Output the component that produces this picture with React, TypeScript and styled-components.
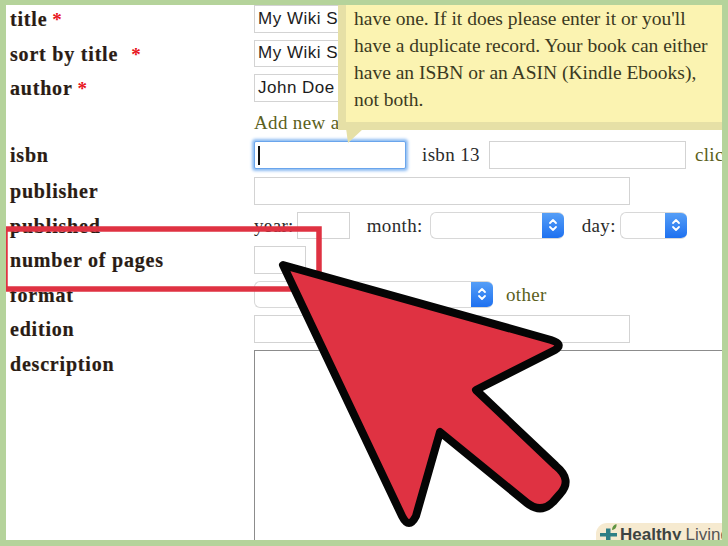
import React from 'react'
import styled, { createGlobalStyle } from 'styled-components'

const GlobalStyle = createGlobalStyle`
  html, body { margin: 0; padding: 0; background: #fff; }
  #root { width: 728px; height: 546px; overflow: hidden; }
`

const Frame = styled.div`
  position: relative;
  box-sizing: border-box;
  width: 728px;
  height: 546px;
  overflow: hidden;
  background: #fff;
  border: 6px solid #b5d39b;
  border-top-width: 5px;
  font-family: 'Liberation Serif', Georgia, serif;
`

const Form = styled.div`
  display: grid;
  grid-template-columns: 248px 1fr;
  grid-auto-rows: min-content;
`

const Label = styled.div<{ $height: number }>`
  height: ${(p) => p.$height}px;
  padding-left: 4px;
  font-size: 20px;
  font-weight: 700;
  line-height: 29px;
  letter-spacing: 0.8px;
  color: #2a1c14;
  -webkit-text-stroke: 0.2px #2a1c14;
  white-space: nowrap;
`

const Star = styled.span<{ $gap?: number }>`
  margin-left: ${(p) => p.$gap ?? 5}px;
  color: #e8141c;
  -webkit-text-stroke: 0;
  font-size: 19px;
`

const FieldRow = styled.div<{ $height: number }>`
  display: flex;
  align-items: flex-start;
  height: ${(p) => p.$height}px;
  white-space: nowrap;
`

const TextField = styled.div<{ $width: number; $focused?: boolean; $left?: number }>`
  box-sizing: border-box;
  flex: none;
  display: flex;
  align-items: center;
  overflow: hidden;
  width: ${(p) => p.$width}px;
  height: 27.6px;
  margin-left: ${(p) => p.$left ?? 0}px;
  padding-left: 3px;
  background: #fff;
  border: 1.5px solid ${(p) => (p.$focused ? '#6aa5ec' : '#d3d3d3')};
  box-shadow: ${(p) => (p.$focused ? '0 0 3px 1.5px #8dbcf2' : 'none')};
  border-radius: ${(p) => (p.$focused ? 2 : 0)}px;
  font-family: 'Liberation Sans', Arial, sans-serif;
  font-size: 17px;
  letter-spacing: 0.5px;
  color: #1c1c1c;
`

const Caret = styled.span`
  width: 2px;
  height: 19px;
  background: #111;
`

const Inline = styled.span<{ $left: number; $olive?: boolean }>`
  flex: none;
  margin-left: ${(p) => p.$left}px;
  font-size: 19px;
  line-height: 27px;
  letter-spacing: 0.35px;
  color: ${(p) => (p.$olive ? '#5b6020' : '#2b2b2b')};
`

const SelectBox = styled.div<{ $width: number; $left?: number }>`
  box-sizing: border-box;
  flex: none;
  display: flex;
  justify-content: flex-end;
  width: ${(p) => p.$width}px;
  height: 27px;
  margin-left: ${(p) => p.$left ?? 0}px;
  background: #fff;
  border: 1.5px solid #d8d8d8;
  border-right: none;
  border-radius: 6px;
  overflow: hidden;
`

const SelectCap = styled.div`
  width: 22px;
  margin: -1.5px 0;
  display: flex;
  align-items: center;
  justify-content: center;
  background: linear-gradient(#5aa2f7, #1c6ff0);
`

const TextArea = styled.div`
  box-sizing: border-box;
  width: 490px;
  height: 200px;
  background: #fff;
  border-top: 1.5px solid #8c8c8c;
  border-left: 1.5px solid #8c8c8c;
`

const Tooltip = styled.div`
  position: absolute;
  left: 332px;
  top: 0;
  box-sizing: border-box;
  width: 384px;
  height: 125px;
  padding: 0 0 0 8px;
  background: #fbf3b1;
  border-left: 8px solid #e6e0a6;
  border-bottom: 8px solid #e6e0a6;
  font-size: 19.5px;
  line-height: 27px;
  letter-spacing: 0;
  color: #3b3a22;
  white-space: nowrap;
`

const TooltipLine = styled.div`
  height: 27px;
`

const Overlay = styled.svg`
  position: absolute;
  left: -6px;
  top: -5px;
  width: 728px;
  height: 546px;
  pointer-events: none;
`

const Badge = styled.div`
  position: absolute;
  right: -6px;
  bottom: -6px;
  box-sizing: border-box;
  display: flex;
  align-items: center;
  width: 132px;
  height: 23px;
  padding-left: 3px;
  gap: 1px;
  background: #f6ead0;
  border-top-left-radius: 11px;
  font-family: 'Liberation Sans', Arial, sans-serif;
  font-size: 17px;
  line-height: 21px;
  color: #555;
  white-space: nowrap;
`

const BadgeStrong = styled.strong`
  color: #3d4442;
  margin-right: 4px;
`

const BadgeGlyph = styled.svg`
  flex: none;
  width: 20px;
  height: 23px;
`

function Chevrons() {
  return (
    <svg width="10" height="16" viewBox="0 0 10 16" fill="none" stroke="#fff" strokeWidth="1.8" strokeLinecap="round" strokeLinejoin="round">
      <path d="M2 6 5 3 8 6" />
      <path d="M2 10 5 13 8 10" />
    </svg>
  )
}

function BadgeIcon() {
  return (
    <BadgeGlyph viewBox="0 0 20 23">
      <path d="M7 5.5h4.5V10H18v3.5h-6.5V20H7v-6.5H1V10h6z" fill="#2f7f86" />
      <path d="M13 7c0-3.5 2-5.5 4.5-6 .3 3-1 5.500-4.500 6z" fill="#5f9440" />
    </BadgeGlyph>
  )
}

export default function App() {
  return (
    <>
      <GlobalStyle />
      <Frame>
        <Form>
          <Label $height={34.6}>title<Star>*</Star></Label>
          <FieldRow $height={34.6}><TextField $width={86}>My Wiki Sa</TextField></FieldRow>

          <Label $height={34.6}>sort by title<Star $gap={13}>*</Star></Label>
          <FieldRow $height={34.6}><TextField $width={86}>My Wiki Sa</TextField></FieldRow>

          <Label $height={34.6}>author<Star>*</Star></Label>
          <FieldRow $height={34.6}><TextField $width={86}>John Doe</TextField></FieldRow>

          <Label $height={32.6} />
          <FieldRow $height={32.6}><Inline $left={0} $olive>Add new a</Inline></FieldRow>

          <Label $height={35.6}>isbn</Label>
          <FieldRow $height={35.6}>
            <TextField $width={152} $focused><Caret /></TextField>
            <Inline $left={16}>isbn 13</Inline>
            <TextField $width={197} $left={9} />
            <Inline $left={9} $olive>clic</Inline>
          </FieldRow>

          <Label $height={34.6}>publisher</Label>
          <FieldRow $height={34.6}><TextField $width={376} /></FieldRow>

          <Label $height={34.6}>published</Label>
          <FieldRow $height={34.6}>
            <Inline $left={0}>year:</Inline>
            <TextField $width={53} $left={3} />
            <Inline $left={17}>month:</Inline>
            <SelectBox $width={134} $left={7}><SelectCap><Chevrons /></SelectCap></SelectBox>
            <Inline $left={18}>day:</Inline>
            <SelectBox $width={67} $left={4}><SelectCap><Chevrons /></SelectCap></SelectBox>
          </FieldRow>

          <Label $height={34.6}>number of pages</Label>
          <FieldRow $height={34.6}><TextField $width={52} /></FieldRow>

          <Label $height={34.6}>format</Label>
          <FieldRow $height={34.6}>
            <SelectBox $width={239}><SelectCap><Chevrons /></SelectCap></SelectBox>
            <Inline $left={13} $olive>other</Inline>
          </FieldRow>

          <Label $height={34.6}>edition</Label>
          <FieldRow $height={34.6}><TextField $width={376} /></FieldRow>

          <Label $height={200}>description</Label>
          <TextArea />
        </Form>

        <Tooltip>
          <TooltipLine>have one. If it does please enter it or you'll</TooltipLine>
          <TooltipLine>have a duplicate record. Your book can either</TooltipLine>
          <TooltipLine>have an ISBN or an ASIN (Kindle Ebooks),</TooltipLine>
          <TooltipLine>not both.</TooltipLine>
        </Tooltip>

        <Overlay viewBox="0 0 728 546">
          <path d="M346 128 L348 143 L364 128 Z" fill="#e6e0a6" />
          <rect x="5" y="229" width="314" height="60" fill="none" stroke="#df3242" strokeWidth="5.5" />
          <path
            d="M283 265 L551 340 Q564 344 555 350 L476 390 L556 466 Q573 480 560 494 L553 502 Q541 514 527 503 L440 432 L416 516 Q409 530 402 516 Z"
            fill="#df3242"
            stroke="#050505"
            strokeWidth="8"
            strokeLinejoin="round"
          />
        </Overlay>

        <Badge>
          <BadgeIcon />
          <span><BadgeStrong>Healthy</BadgeStrong>Living</span>
        </Badge>
      </Frame>
    </>
  )
}
